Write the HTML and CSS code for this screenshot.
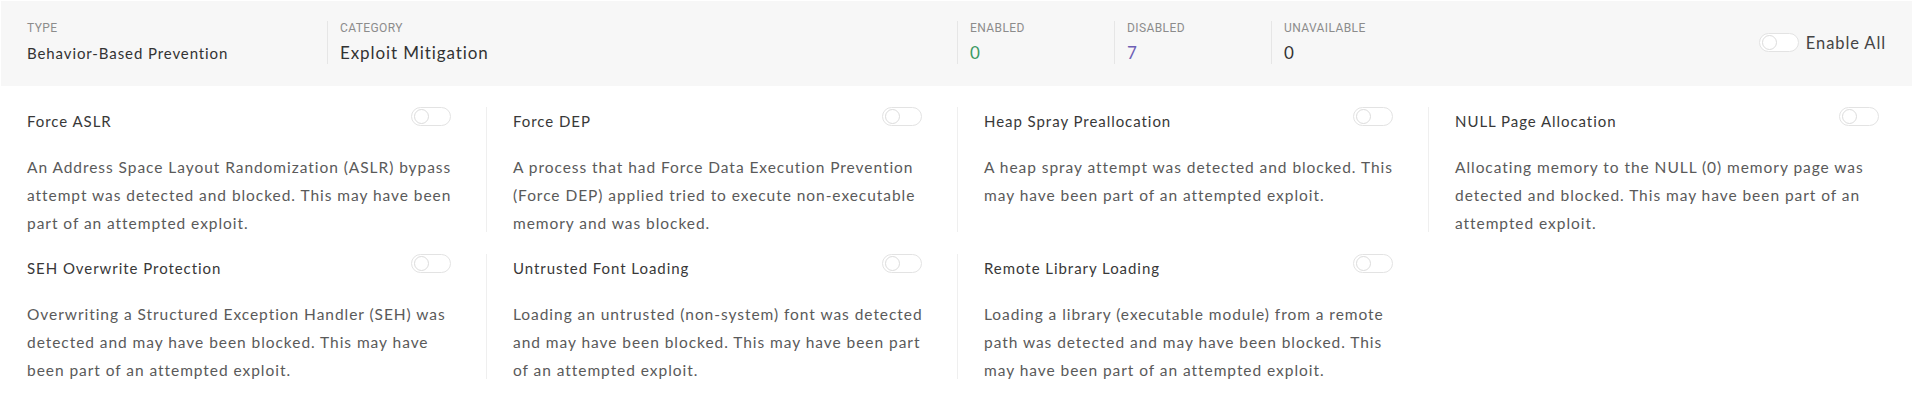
FILE: index.html
```html
<!DOCTYPE html>
<html lang="en">
<head>
    <meta charset="UTF-8">
    <meta name="viewport" content="width=device-width, initial-scale=1.0">
    <title>Exploit Mitigation</title>
    <link rel="stylesheet" href="styles.css">
</head>
<body>
    <div class="summary">
        <div class="summary-item type">
            <span class="label">Type</span>
            <span class="value">Behavior-Based Prevention</span>
        </div>
        <div class="summary-item category">
            <span class="label">Category</span>
            <span class="value large">Exploit Mitigation</span>
        </div>
        <div class="summary-item stat">
            <span class="label">Enabled</span>
            <span class="value large enabled">0</span>
        </div>
        <div class="summary-item stat">
            <span class="label">Disabled</span>
            <span class="value large disabled">7</span>
        </div>
        <div class="summary-item stat">
            <span class="label">Unavailable</span>
            <span class="value large">0</span>
        </div>
        <div class="summary-actions">
            <span class="toggle"></span>
            <span class="enable-all">Enable All</span>
        </div>
    </div>

    <div class="rules">
        <div class="rule">
            <div class="rule-head">
                <span class="rule-title">Force ASLR</span>
                <span class="toggle"></span>
            </div>
            <p class="rule-desc">An Address Space Layout Randomization (ASLR) bypass attempt was detected and blocked. This may have been part of an attempted exploit.</p>
        </div>
        <div class="rule">
            <div class="rule-head">
                <span class="rule-title">Force DEP</span>
                <span class="toggle"></span>
            </div>
            <p class="rule-desc">A process that had Force Data Execution Prevention (Force DEP) applied tried to execute non-executable memory and was blocked.</p>
        </div>
        <div class="rule">
            <div class="rule-head">
                <span class="rule-title">Heap Spray Preallocation</span>
                <span class="toggle"></span>
            </div>
            <p class="rule-desc">A heap spray attempt was detected and blocked. This may have been part of an attempted exploit.</p>
        </div>
        <div class="rule">
            <div class="rule-head">
                <span class="rule-title">NULL Page Allocation</span>
                <span class="toggle"></span>
            </div>
            <p class="rule-desc">Allocating memory to the NULL (0) memory page was detected and blocked. This may have been part of an attempted exploit.</p>
        </div>
        <div class="rule">
            <div class="rule-head">
                <span class="rule-title">SEH Overwrite Protection</span>
                <span class="toggle"></span>
            </div>
            <p class="rule-desc">Overwriting a Structured Exception Handler (SEH) was detected and may have been blocked. This may have been part of an attempted exploit.</p>
        </div>
        <div class="rule">
            <div class="rule-head">
                <span class="rule-title">Untrusted Font Loading</span>
                <span class="toggle"></span>
            </div>
            <p class="rule-desc">Loading an untrusted (non-system) font was detected and may have been blocked. This may have been part of an attempted exploit.</p>
        </div>
        <div class="rule">
            <div class="rule-head">
                <span class="rule-title">Remote Library Loading</span>
                <span class="toggle"></span>
            </div>
            <p class="rule-desc">Loading a library (executable module) from a remote path was detected and may have been blocked. This may have been part of an attempted exploit.</p>
        </div>
    </div>
</body>
</html>
```

FILE: styles.css
```css
body {
    margin: 0;
    font-family: Lato, "Open Sans", Arial, sans-serif;
    background: white;
    color: #3a3a3a;
}

/* summary bar */
.summary {
    display: flex;
    align-items: flex-start;
    height: 85px;
    margin: 1px 6px 0 1px;
    padding: 20px 26px 0 26px;
    background-color: #f7f7f7;
    box-sizing: border-box;
}

.summary-item {
    display: flex;
    flex-direction: column;
    height: 43px;
    padding-left: 12px;
    border-left: 1px solid #e6e6e6;
    box-sizing: border-box;
}

.summary-item.type {
    width: 300px;
    padding-left: 0;
    border-left: none;
}

.summary-item.category {
    flex: 1;
}

.summary-item.stat {
    width: 157px;
}

.label {
    font-family: Roboto, Arial, sans-serif;
    font-size: 12px;
    line-height: 14px;
    letter-spacing: 0.4px;
    text-transform: uppercase;
    color: #8c8c8c;
}

.value {
    margin-top: 7px;
    font-size: 15px;
    line-height: 22px;
    letter-spacing: 0.9px;
    color: #333;
}

.value.large {
    font-size: 17px;
}

.value.enabled {
    color: #3a9a62;
}

.value.disabled {
    color: #6e5fb5;
}

.summary-actions {
    width: 458px;
    height: 43px;
    display: flex;
    align-items: center;
    justify-content: flex-end;
    gap: 7px;
}

.enable-all {
    font-size: 16.5px;
    letter-spacing: 0.9px;
    color: #444;
}

/* toggle switch */
.toggle {
    position: relative;
    display: inline-block;
    flex: none;
    width: 40px;
    height: 19px;
    border: 1px solid #e3e3e3;
    border-radius: 10px;
    background: white;
    box-sizing: border-box;
}

.toggle::after {
    content: "";
    position: absolute;
    left: 2px;
    top: 1px;
    width: 15px;
    height: 15px;
    border: 1px solid #dcdcdc;
    border-radius: 50%;
    background: white;
    box-sizing: border-box;
}

/* rule cards */
.rules {
    display: grid;
    grid-template-columns: 459px 471px 471px 1fr;
    row-gap: 22px;
    margin-top: 21px;
    padding: 0 4px 0 27px;
}

.rule {
    padding-right: 35px;
}

.rule:not(:nth-child(4n+1)) {
    padding-left: 26px;
    border-left: 1px solid #efefef;
}

.rule-head {
    display: flex;
    justify-content: space-between;
    align-items: flex-start;
}

.rule-title {
    font-size: 15px;
    line-height: 28px;
    letter-spacing: 0.95px;
    color: #383838;
}

.rule-desc {
    margin: 18px -3px -5px 0;
    font-size: 15.5px;
    line-height: 28px;
    letter-spacing: 0.95px;
    color: #5a5a5a;
}
```
